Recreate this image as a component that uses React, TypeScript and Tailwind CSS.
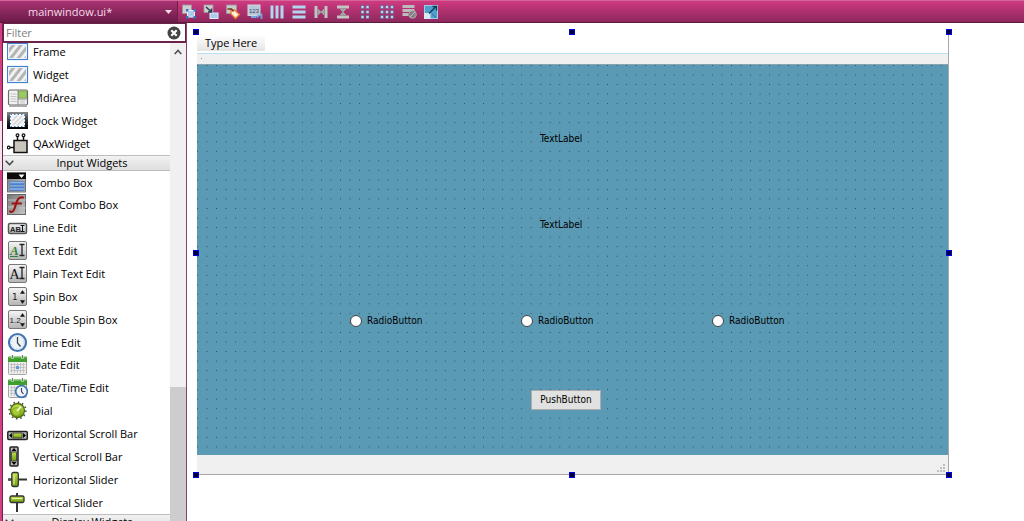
import React from "react";

type Glyph = React.ReactNode;

function Icon({ children, size = 22 }: { children: Glyph; size?: 16 | 22 }) {
  return (
    <svg
      viewBox={size === 16 ? "0 0 16 16" : "0 0 22 22"}
      width={size}
      height={size}
      className="shrink-0"
      aria-hidden="true"
    >
      {children}
    </svg>
  );
}

function Defs() {
  return (
    <svg width="0" height="0" className="absolute" aria-hidden="true">
      <defs>
        <linearGradient id="grey" x1="0" y1="0" x2="0" y2="1">
          <stop offset="0" stopColor="#f6f6f6" />
          <stop offset="1" stopColor="#b4b4b4" />
        </linearGradient>
        <linearGradient id="steel" x1="0" y1="0" x2="1" y2="1">
          <stop offset="0" stopColor="#777" />
          <stop offset="1" stopColor="#c6c6c6" />
        </linearGradient>
        <linearGradient id="dark" x1="0" y1="0" x2="0" y2="1">
          <stop offset="0" stopColor="#8a8a8a" />
          <stop offset="0.6" stopColor="#222" />
          <stop offset="1" stopColor="#000" />
        </linearGradient>
        <linearGradient id="lime" x1="0" y1="0" x2="0" y2="1">
          <stop offset="0" stopColor="#c4e352" />
          <stop offset="1" stopColor="#6d9b0c" />
        </linearGradient>
        <pattern id="hatch" width="6" height="6" patternUnits="userSpaceOnUse" patternTransform="rotate(38)">
          <rect width="6" height="6" fill="#f1f1f1" />
          <rect width="3" height="6" fill="#b4b4b4" />
        </pattern>
      </defs>
    </svg>
  );
}

const Hatched = () => (
  <>
    <rect x="0.5" y="2.5" width="20" height="16" fill="#fff" stroke="#4282cc" strokeWidth="1.2" />
    <rect x="2" y="4" width="17" height="13" fill="url(#hatch)" />
  </>
);
const Plate = () => (
  <rect x="1.5" y="1.5" width="18" height="18" rx="1.5" fill="url(#grey)" stroke="#777" />
);
const Arrows = () => (
  <>
    <path d="M13.500 7.500l2-3 2 3z" fill="#111" stroke="#111" strokeWidth="0.5" />
    <path d="M13.500 14.500l2 3 2-3z" fill="#111" stroke="#111" strokeWidth="0.5" />
  </>
);
const Calendar = () => (
  <>
    <rect x="1.5" y="3.5" width="18" height="17" rx="1" fill="#ececec" stroke="#a5a5a5" />
    <path d="M1 3.5q0-1 1-1h17q1 0 1 1V8H1z" fill="#3f9f2e" />
    <path d="M2 3.5h17" stroke="#6cc455" />
    <path d="M5.5 1v4M15.5 1v4" stroke="#eee" strokeWidth="2" />
    <path d="M5.5 1v3.500M15.5 1v3.500" stroke="#555" strokeWidth="0.8" />
    <path d="M3 10.500h15M3 13.500h15M3 16.500h15M4.500 9v10M7.500 9v10M10.500 9v10M13.500 9v10M16.500 9v10" stroke="#bbb" strokeWidth="0.8" />
  </>
);

const frame = <Hatched />;
const mdi = (
  <>
    <rect x="1.500" y="3" width="19" height="15" rx="1.500" fill="#f2f2f2" stroke="#6a6a6a" strokeWidth="1.200" />
    <path d="M2 19.200h18" stroke="#888" />
    <rect x="11.500" y="4" width="8" height="7" fill="#9acb62" stroke="#6f9f3c" strokeWidth="0.7" />
    <path d="M11 3v15M11 12h9" stroke="#888" />
    <path d="M3.500 7h6M3.500 9.500h6M3.500 12h6M3.500 14.500h6M13 14h5M13 16h5" stroke="#bbb" strokeWidth="0.9" />
  </>
);
const dock = (
  <>
    <rect x="0" y="2" width="21" height="17" fill="url(#dark)" />
    <rect x="3.500" y="4.500" width="14" height="12" fill="#f4f4f4" stroke="#fff" />
    <path d="M6 15l9-9M10 15.500l6.500-6.500M5 11l5.500-5.500" stroke="#d6d6d6" strokeWidth="1.500" />
    <rect x="3.500" y="4.500" width="14" height="12" fill="none" stroke="#3b7fd0" strokeDasharray="1.500 2" />
  </>
);
const qax = (
  <>
    <rect x="7" y="7.500" width="13" height="12" fill="#c9c6bd" stroke="#111" strokeWidth="1.500" />
    <path d="M10.500 7V3M16.500 7V3M7 14.500H2.500" stroke="#111" strokeWidth="1.500" />
    <g fill="#fff" stroke="#111" strokeWidth="1.200">
      <circle cx="10.500" cy="2.200" r="1.400" />
      <circle cx="16.500" cy="2.200" r="1.400" />
      <circle cx="1.700" cy="14.500" r="1.300" />
    </g>
  </>
);
const combo = (
  <>
    <rect x="0.500" y="0.500" width="18" height="19.500" fill="url(#steel)" stroke="#555" strokeWidth="0.8" />
    <rect x="0" y="1" width="19" height="6" fill="#0b0b0b" />
    <path d="M11.500 2.500h6l-3 3.500z" fill="#fff" />
    <rect x="2.500" y="9" width="15" height="10" fill="#4f80c4" />
    <path d="M3 10.500h14M3 13.800h14M3 17h14" stroke="#8fb4e6" strokeWidth="1.300" />
  </>
);
const fontCombo = (
  <>
    <rect x="0.500" y="0.500" width="18" height="20" fill="url(#steel)" stroke="#666" />
    <path d="M1 6h18M1 13h6M12 14h7" stroke="#ccc" strokeWidth="0.8" />
    <path d="M3 17.500c3 1.500 4-1 5.500-6C10 6 11.500 2.500 16 3.500M5.500 9.500h8.500" fill="none" stroke="#9b1713" strokeWidth="2.200" strokeLinecap="round" />
  </>
);
const lineEdit = (
  <>
    <rect x="1.500" y="6.500" width="18" height="10" rx="1.500" fill="url(#grey)" stroke="#555" strokeWidth="1.500" />
    <text x="3" y="14.500" fontSize="7.500" fontWeight="700" fontFamily="Liberation Sans, sans-serif" fill="#222">AB</text>
    <path d="M13.500 8.500h4M13.500 14.500h4M15.500 8.500v6" stroke="#111" />
  </>
);
const letterI = <path d="M12.500 4.500h5M12.500 15.500h5M15 4.500v11" stroke="#222" strokeWidth="1.300" />;
const textEdit = (
  <>
    <Plate />
    <text x="3" y="14.500" fontSize="13" fontStyle="italic" fontFamily="Liberation Serif, serif" fontWeight="700" fill="#2f8535">A</text>
    <path d="M3 16.500h8" stroke="#2f8535" />
    {letterI}
  </>
);
const plainEdit = (
  <>
    <Plate />
    <text x="2.500" y="15.500" fontSize="14" fontFamily="Liberation Serif, serif" fill="#111">A</text>
    {letterI}
  </>
);
const spin = (
  <>
    <Plate />
    <text x="5" y="13.500" fontSize="9" fontFamily="DejaVu Sans, sans-serif" fill="#222">1</text>
    <Arrows />
  </>
);
const dspin = (
  <>
    <Plate />
    <text x="2.500" y="14" fontSize="8" fontFamily="Liberation Sans, sans-serif" fill="#222">1.2</text>
    <Arrows />
  </>
);
const clock = (
  <>
    <circle cx="10.500" cy="10.500" r="8.500" fill="#eef3f8" stroke="#3f74b4" strokeWidth="2.200" />
    <circle cx="10.500" cy="10.500" r="6.300" fill="none" stroke="#bcc8d4" strokeDasharray="1 2.300" />
    <path d="M10.500 5v6l3 3.500" fill="none" stroke="#3a4650" strokeWidth="1.300" />
  </>
);
const date = (
  <>
    <Calendar />
    <rect x="9" y="12" width="3" height="3" fill="#5d9be0" />
  </>
);
const dateTime = (
  <>
    <Calendar />
    <circle cx="14.500" cy="14.500" r="5.800" fill="#f1f5f9" stroke="#3f74b4" strokeWidth="1.700" />
    <path d="M14.500 11v3.500l2 2.500" fill="none" stroke="#3a4650" strokeWidth="1.200" />
  </>
);
const dial = (
  <>
    <circle cx="10.500" cy="10.500" r="8.300" fill="none" stroke="#444" strokeWidth="1.600" strokeDasharray="1.500 2.850" />
    <circle cx="10.500" cy="10.500" r="7" fill="url(#lime)" stroke="#4d6b10" strokeWidth="1.300" />
    <circle cx="9.500" cy="11.500" r="4" fill="#a8cc34" stroke="#7ba01f" strokeWidth="0.7" />
    <path d="M10 11l4-4.500" stroke="#f4fad4" strokeWidth="1.800" />
  </>
);
const hscroll = (
  <>
    <rect x="0.800" y="8.500" width="19.500" height="8" rx="1" fill="#b9b9b9" stroke="#222" strokeWidth="1.500" />
    <rect x="6" y="10" width="9" height="5" fill="url(#lime)" stroke="#333" strokeWidth="0.8" />
    <path d="M5 10v5l-3-2.500zM16 10v5l3-2.500z" fill="#000" />
  </>
);
const vscroll = (
  <>
    <rect x="3" y="1" width="8" height="19" rx="1" fill="#b9b9b9" stroke="#222" strokeWidth="1.500" />
    <rect x="4.500" y="6" width="5" height="9" fill="url(#lime)" stroke="#333" strokeWidth="0.8" />
    <path d="M4.500 5h5L7 2zM4.500 16h5L7 19z" fill="#000" />
  </>
);
const hslider = (
  <>
    <path d="M1 10.500h19" stroke="#333" strokeWidth="2" />
    <circle cx="2.500" cy="10.500" r="1.500" fill="#555" />
    <rect x="4.800" y="3.500" width="6.500" height="14" rx="1.500" fill="url(#lime)" stroke="#333" strokeWidth="1.300" />
    <path d="M7 5.500v10" stroke="#e8f5b0" />
  </>
);
const vslider = (
  <>
    <path d="M10 1v19" stroke="#333" strokeWidth="2" />
    <rect x="3" y="4" width="14" height="6.500" rx="1.500" fill="url(#lime)" stroke="#333" strokeWidth="1.300" />
    <path d="M5 6.500h10" stroke="#e8f5b0" />
  </>
);

const containers: [string, Glyph][] = [
  ["Frame", frame],
  ["Widget", frame],
  ["MdiArea", mdi],
  ["Dock Widget", dock],
  ["QAxWidget", qax],
];
const inputs: [string, Glyph][] = [
  ["Combo Box", combo],
  ["Font Combo Box", fontCombo],
  ["Line Edit", lineEdit],
  ["Text Edit", textEdit],
  ["Plain Text Edit", plainEdit],
  ["Spin Box", spin],
  ["Double Spin Box", dspin],
  ["Time Edit", clock],
  ["Date Edit", date],
  ["Date/Time Edit", dateTime],
  ["Dial", dial],
  ["Horizontal Scroll Bar", hscroll],
  ["Vertical Scroll Bar", vscroll],
  ["Horizontal Slider", hslider],
  ["Vertical Slider", vslider],
];

const squares = (xs: number[]) => (
  <g fill="#bcd8f0" stroke="#5b5f8c" strokeWidth="0.6">
    {xs.flatMap((x) => [1.5, 6.5, 11.5].map((y) => <rect key={`${x}-${y}`} x={x} y={y} width="3" height="3" />))}
  </g>
);

const tools: [string, Glyph][] = [
  ["Edit Widgets", (
    <>
      <rect x="1.500" y="1" width="9" height="8.500" fill="#cfcfcf" stroke="#999" strokeWidth="0.8" />
      <rect x="6.500" y="6.500" width="7" height="6.500" fill="#a9cbed" stroke="#e8f1fa" />
      <path d="M5 5h2.500v2.500H5zM12.500 5H15v2.500h-2.500zM5 12h2.500v2.500H5zM12.500 12H15v2.500h-2.500z" fill="#3a76c0" />
    </>
  )],
  ["Edit Signals/Slots", (
    <>
      <rect x="1" y="1" width="9" height="7.500" fill="#cfcfcf" stroke="#999" strokeWidth="0.8" />
      <rect x="7" y="9" width="8" height="5.500" fill="#a9cbed" stroke="#dfeaf5" />
      <path d="M3 3l5 4.500M8.500 4.500v3.500H5" stroke="#253d55" strokeWidth="1.500" fill="none" />
    </>
  )],
  ["Edit Buddies", (
    <>
      <rect x="1.500" y="1" width="10" height="8.500" fill="#cbcbcb" stroke="#999" strokeWidth="0.8" />
      <path d="M6 6h3.500l5 4.500-4 4-4.500-4.500z" fill="#fff0dc" stroke="#e87a2a" strokeWidth="1.300" />
      <path d="M2.500 5h4l2 2.500" stroke="#6c371c" strokeWidth="1.300" fill="none" />
    </>
  )],
  ["Edit Tab Order", (
    <>
      <rect x="1" y="1" width="12" height="10.500" fill="#b5c7dc" stroke="#d8d8d8" />
      <text x="2" y="8.500" fontSize="6" fontFamily="Liberation Sans, sans-serif" fill="#445">123</text>
      <path d="M4 13h5M12.500 11l-3 2.500M14.500 9.500v5.500" stroke="#6fa8e4" strokeWidth="1.800" />
    </>
  )],
  ["Lay Out Horizontally", <path d="M3 1.500v13M8 1.500v13M13 1.500v13" stroke="#b4d5f0" strokeWidth="3" />],
  ["Lay Out Vertically", <path d="M1.500 3h13M1.500 8h13M1.500 13h13" stroke="#b4d5f0" strokeWidth="3" />],
  ["Lay Out Horizontally in Splitter", (
    <>
      <path d="M3 2v12M13 2v12" stroke="#c4c4c4" strokeWidth="3" />
      <path d="M4.500 8h7M5 5v6l3-3zM11 5v6L8 8z" stroke="#999" fill="#b5b5b5" />
    </>
  )],
  ["Lay Out Vertically in Splitter", (
    <>
      <path d="M2 3h12M2 13h12" stroke="#c4c4c4" strokeWidth="3" />
      <path d="M8 4.500v7M5 5h6L8 8zM5 11h6L8 8z" stroke="#999" fill="#b5b5b5" />
    </>
  )],
  ["Lay Out in a Form Layout", squares([4, 9])],
  ["Lay Out in a Grid", squares([1.5, 6.5, 11.5])],
  ["Break Layout", (
    <>
      <path d="M1.500 2.500h12M1.500 6.500h12M1.500 10.500h6" stroke="#bcbcbc" strokeWidth="2.800" />
      <circle cx="11.500" cy="10.500" r="3.800" fill="#8b7f86" stroke="#aaa" />
      <path d="M9 13l5-5" stroke="#bbb" />
    </>
  )],
  ["Adjust Size", (
    <>
      <rect x="1.500" y="1.500" width="13" height="13" fill="#4fa0cc" stroke="#9fcbe4" />
      <rect x="1" y="9" width="6.500" height="6" fill="#dbe7f2" />
      <path d="M6 9.500l7-7M9.500 2.500h4v4" stroke="#123c53" strokeWidth="1.400" fill="none" />
      <path d="M9 10l4 3.500" stroke="#2c6f94" />
    </>
  )],
];

function GroupHeader({ title }: { title: string }) {
  return (
    <button
      type="button"
      className="flex h-4 w-full shrink-0 items-center border-y border-[#bdbdbd] bg-linear-to-b from-[#f2f2f2] to-[#dedede] pl-[2px]"
    >
      <svg width="9" height="6" viewBox="0 0 9 6" aria-hidden="true">
        <path d="M0.700 0.700l3.800 4 3.800-4" fill="none" stroke="#444" strokeWidth="1.600" />
      </svg>
      <span className="flex-1 text-center">{title}</span>
    </button>
  );
}

function Item({ label, icon }: { label: string; icon: Glyph }) {
  return (
    <li className="flex h-[23px] shrink-0">
      <button type="button" className="flex w-full items-center gap-1 pl-1 text-left whitespace-nowrap">
        <Icon>{icon}</Icon>
        {label}
      </button>
    </li>
  );
}

function Handle({ place }: { place: string }) {
  return <span className={`absolute size-[6px] border border-[#0000e0] bg-[#00003c] ${place}`} />;
}

function Radio({ id, place }: { id: string; place: string }) {
  return (
    <div className={`absolute flex items-center gap-[5px] ${place}`}>
      <input
        id={id}
        type="radio"
        name="choice"
        className="size-3 appearance-none rounded-full border border-[#444] bg-white checked:bg-[#444]"
      />
      <label htmlFor={id}>RadioButton</label>
    </div>
  );
}

export default function App() {
  return (
    <div className="flex h-screen flex-col overflow-hidden bg-white font-['Open_Sans','Noto_Sans',sans-serif] text-[11px] leading-4 text-black">
      <Defs />
      <header className="flex h-[23px] shrink-0 items-center border-t border-[#d5669c] border-b border-b-[#5c1a3f] bg-linear-to-b from-[#cf3a80] to-[#8d285d]">
        <div className="relative h-full w-[178px] shrink-0 border-r border-[#6d1d48] bg-linear-to-b from-[#a93474] to-[#6c1b48]">
          <select
            aria-label="Open form"
            className="h-full w-full appearance-none pl-7 text-[11px] text-[#f3dce8] outline-none"
          >
            <option>mainwindow.ui*</option>
          </select>
          <svg width="7" height="4" viewBox="0 0 7 4" className="pointer-events-none absolute top-[9px] right-[5px]" aria-hidden="true">
            <path d="M0 0h7L3.500 4z" fill="#f3dce8" />
          </svg>
        </div>
        <nav className="flex" aria-label="Form tools">
          {tools.map(([name, icon]) => (
            <button key={name} type="button" aria-label={name} className="flex w-[22px] justify-center">
              <Icon size={16}>{icon}</Icon>
            </button>
          ))}
        </nav>
      </header>

      <div className="flex min-h-0 flex-1">
        <div className="flex w-[3px] shrink-0 flex-col border-r border-[#6b2148] bg-[#d23f84]">
          <div className="h-[98px]" />
          <div className="h-[49px] bg-[#f6e3ec]" />
        </div>
        <aside className="flex w-[184px] shrink-0 flex-col border-r border-[#8b4268]">
          <div className="flex h-5 shrink-0 items-center border-x border-t border-b-2 border-[#6b2148] bg-white pr-1">
            <input
              type="text"
              aria-label="Filter"
              placeholder="Filter"
              className="min-w-0 flex-1 pl-[2px] outline-none placeholder:text-[#808080]"
            />
            <button type="button" aria-label="Clear filter">
              <svg width="14" height="14" viewBox="0 0 14 14" aria-hidden="true">
                <circle cx="7" cy="7" r="6.500" fill="#444" />
                <path d="M4.300 4.300l5.400 5.400M9.700 4.300L4.300 9.700" stroke="#fff" strokeWidth="2.200" />
              </svg>
            </button>
          </div>
          <div className="flex min-h-0 flex-1">
            <div className="flex min-w-0 flex-1 flex-col overflow-hidden">
              <ul className="flex h-28 shrink-0 flex-col justify-end overflow-hidden">
                {containers.map(([label, icon]) => (
                  <Item key={label} label={label} icon={icon} />
                ))}
              </ul>
              <GroupHeader title="Input Widgets" />
              <ul className="grid h-[343px] shrink-0 auto-rows-fr">
                {inputs.map(([label, icon]) => (
                  <Item key={label} label={label} icon={icon} />
                ))}
              </ul>
              <GroupHeader title="Display Widgets" />
            </div>
            <div className="flex w-4 flex-col bg-[#f0f0f0]">
              <button type="button" aria-label="Scroll up" className="flex h-[17px] items-center justify-center">
                <svg width="8" height="6" viewBox="0 0 8 6" aria-hidden="true">
                  <path d="M0.700 5L4 1.500 7.300 5" fill="none" stroke="#505050" strokeWidth="1.600" />
                </svg>
              </button>
              <div className="mt-auto h-[134px] bg-[#cdcdcd]" />
            </div>
          </div>
        </aside>

        <main className="flex-1 px-[10px] py-[9px]">
          <section className="relative flex h-[443px] w-[752px] flex-col border-r border-b border-[#a8a8a8]">
            <div className="flex h-[21px] items-center pt-px">
              <button type="button" className="h-4 bg-linear-to-b from-white to-[#e4e4e4] px-2">
                Type Here
              </button>
            </div>
            <div className="flex h-[11px] border-t border-[#b5e3f5] bg-[#f0f0f0] pt-1 pl-1">
              <span className="size-px bg-[#888]" />
            </div>
            <div className="relative flex-1 border-t border-[#8aa3ae] bg-[#5b9ab4] font-['DejaVu_Sans_Condensed','DejaVu_Sans',sans-serif] text-[10px]">
              <svg className="absolute inset-0 h-full w-full" aria-hidden="true">
                <defs>
                  <pattern id="dots" width="9.535" height="9.535" patternUnits="userSpaceOnUse">
                    <rect x="0" y="0" width="0.9" height="0.9" fill="#1e4254" />
                  </pattern>
                </defs>
                <rect width="100%" height="100%" fill="url(#dots)" />
              </svg>
              <span className="absolute top-[66px] left-[343px]">TextLabel</span>
              <span className="absolute top-[152px] left-[343px]">TextLabel</span>
              <Radio id="radio-1" place="top-[248px] left-[153px]" />
              <Radio id="radio-2" place="top-[248px] left-[324px]" />
              <Radio id="radio-3" place="top-[248px] left-[515px]" />
              <button
                type="button"
                className="absolute top-[325px] left-[334px] h-5 w-[70px] border border-[#adadad] bg-[#e1e1e1]"
              >
                PushButton
              </button>
            </div>
            <footer className="flex h-[19px] items-end justify-end bg-[#f0f0f0] p-[2px]">
              <svg width="9" height="9" viewBox="0 0 9 9" aria-hidden="true">
                <path d="M0 7h2v2H0zM3 7h2v2H3zM6 7h2v2H6zM3 4h2v2H3zM6 4h2v2H6zM6 1h2v2H6z" fill="#bfbfbf" />
              </svg>
            </footer>
            <Handle place="-top-[3px] -left-[4px]" />
            <Handle place="-top-[3px] left-[372px]" />
            <Handle place="-top-[3px] -right-[4px]" />
            <Handle place="top-[218px] -left-[4px]" />
            <Handle place="top-[218px] -right-[4px]" />
            <Handle place="-bottom-[4px] -left-[4px]" />
            <Handle place="-bottom-[4px] left-[372px]" />
            <Handle place="-bottom-[4px] -right-[4px]" />
          </section>
        </main>
      </div>
    </div>
  );
}
